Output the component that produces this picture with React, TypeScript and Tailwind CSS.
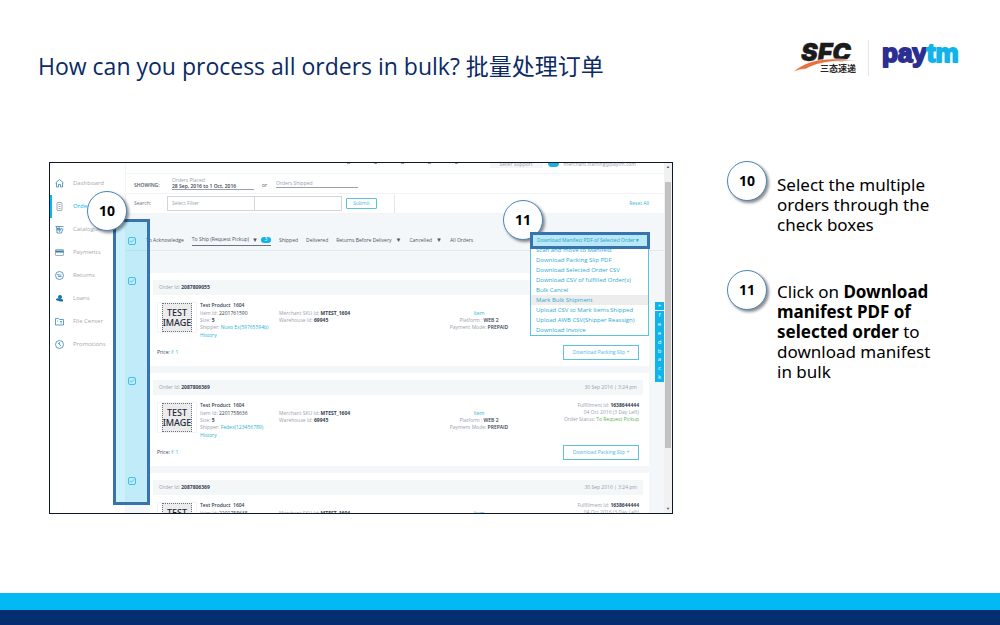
import { Check } from "lucide-react";
import type { ReactNode } from "react";

const NAV = [
  { label: "Dashboard", icon: <path d="M1 8 9 1l8 7M3 7v9h4v-5h4v5h4V7" /> },
  { label: "Orders", active: true, icon: <><rect x="4" y="1" width="10" height="16" rx="2" stroke="#8397a3" /><path d="M7 5h4M7 9h4M7 13h4" stroke="#8397a3" /></> },
  { label: "Catalogue", icon: <><path d="M1 3h16M3 3l1 13h9l3-9" /><path d="M5 6h5v4H5z" fill="#9aa7ae" /><path d="m8 14 6-8" /></> },
  { label: "Payments", icon: <><rect x="1" y="3" width="16" height="12" rx="1" stroke="#8ba0ad" /><path d="M1 7h16" strokeWidth="4" stroke="#2f7fac" /></> },
  { label: "Returns", icon: <><circle cx="9" cy="9" r="8" /><path d="M5 8h8M5 8l2-2M13 11H6" /></> },
  { label: "Loans", icon: <><circle cx="10" cy="6" r="4" fill="#1a72ad" stroke="none" /><path d="M2 10c4-3 8 0 14 1v4c-6 0-9-1-14-3Z" fill="#1a72ad" stroke="none" /></> },
  { label: "File Center", icon: <><path d="M1 3h6l2 2h8v11H1Z" /><path d="M12 13V8M10 10l2-2 2 2M4 8h2" stroke="#19a7db" /></> },
  { label: "Promotions", icon: <><circle cx="9" cy="9" r="8" /><path d="M9 4v5l3 3M6 6l3 3" stroke="#19a7db" /></> },
];

const MENU = [
  "Scan and move to Manifest",
  "Download Packing Slip PDF",
  "Download Selected Order CSV",
  "Download CSV of fulfilled Order(s)",
  "Bulk Cancel",
  "Mark Bulk Shipment",
  "Upload CSV to Mark Items Shipped",
  "Upload AWB CSV(Shipper Reassign)",
  "Download Invoice",
];

type Order = { id: string; item: string; shipper: string; date?: string; fulfillment?: string };

const ORDERS: Order[] = [
  { id: "2087809055", item: "2201761590", shipper: "Nuvo Ex(59765594b)" },
  { id: "2087806369", item: "2201758636", shipper: "Fedex(123456789)", date: "30 Sep 2016 | 3:24 pm", fulfillment: "1638644444" },
  { id: "2087806369", item: "2201758635", shipper: "Fedex(123456789)", date: "30 Sep 2016 | 3:24 pm", fulfillment: "1638644444" },
];

function SfcLogo() {
  return (
    <svg viewBox="0 0 76 44" className="w-[76px] h-[44px]" role="img" aria-label="SFC">
      <text x="9" y="25" fontFamily="Inter, Liberation Sans, sans-serif" fontSize="25" fontWeight="900" fontStyle="italic" fill="#1d1a1b" stroke="#1d1a1b" strokeWidth="0.5">SFC</text>
      <path d="M1 36C14 24 34 20 66 25C40 24 24 27 14 33C10 33 6 34 1 36Z" fill="#e8703a" stroke="#fff" strokeWidth="0.6" />
      <text x="28" y="36" fontFamily="Noto Sans CJK SC, sans-serif" fontSize="9" fontWeight="700" fill="#2a2526">三态速递</text>
    </svg>
  );
}

function PaytmLogo() {
  return (
    <svg viewBox="0 0 80 44" className="w-[80px] h-[44px]" role="img" aria-label="Paytm">
      <text x="1" y="26" fontFamily="Liberation Sans, sans-serif" fontSize="26" fontWeight="700" fill="#2b2f92" stroke="#2b2f92" strokeWidth="2" strokeLinejoin="round">
        pay<tspan fill="#10b4e8" stroke="#10b4e8">tm</tspan>
      </text>
    </svg>
  );
}

function Marker({ children, className = "" }: { children: ReactNode; className?: string }) {
  return (
    <span className={`flex size-10 shrink-0 items-center justify-center rounded-full border border-[#4a84bd] bg-white text-sm font-bold text-black shadow-[2px_2px_3px_rgba(0,0,0,0.45)] ${className}`}>
      {children}
    </span>
  );
}

function OrderCheck({ label, className = "" }: { label: string; className?: string }) {
  return (
    <span className={`relative block size-2 ${className}`}>
      <input type="checkbox" defaultChecked aria-label={label} className="block size-2 appearance-none rounded-xs border border-[#4cc4e6]" />
      <Check className="pointer-events-none absolute left-px top-px size-1.5 text-[#3fb9de]" strokeWidth={3} />
    </span>
  );
}

function Sidebar() {
  return (
    <nav className="w-[76px] shrink-0 border-r border-gray-100 bg-white pt-[9px] text-[6px]">
      {NAV.map(({ label, icon, active }) => (
        <a key={label} href="#/" className={`flex h-[23px] items-center gap-[9px] border-l-2 pl-[3px] ${active ? "border-[#00b9f5] text-[#00b9f5]" : "border-transparent text-[#a9a9a9]"}`}>
          <svg viewBox="0 0 18 18" className="size-[9px]" fill="none" stroke="#3d86b3" strokeWidth="1.6">{icon}</svg>
          {label}
        </a>
      ))}
    </nav>
  );
}

function TopBar() {
  return (
    <div className="flex h-[11px] shrink-0 justify-end gap-[5px] overflow-hidden border-b border-gray-100 bg-white pr-7 leading-[3px] text-gray-400">
      <div className="mr-[27px] flex gap-6">
        {[0, 1, 2, 3, 4].map((i) => (
          <span key={i} className="h-px w-[3px] bg-gray-400" />
        ))}
      </div>
      <span className="h-[5px] w-[53px] bg-[#f6f6f6] text-center leading-[2px]">Seller Support</span>
      <span className="h-1 w-[11px] rounded-b-full bg-[#12b1e7]" />
      <span>merchant.training@paytm.com</span>
    </div>
  );
}

function Filters() {
  return (
    <div className="shrink-0 bg-white">
      <div className="flex h-5 items-center border-b border-gray-100 pl-2">
        <span className="w-[38px] pt-1 font-semibold text-gray-600">SHOWING:</span>
        <label className="w-[82px] border-b border-gray-400 leading-[5px] text-gray-400">
          Orders Placed
          <input defaultValue="28 Sep, 2016 to 1 Oct, 2016" className="block h-[6px] w-full font-semibold text-gray-700" />
        </label>
        <span className="w-[22px] pl-2 pt-1 text-gray-600">or</span>
        <input aria-label="Orders Shipped" placeholder="Orders Shipped" className="h-[9px] w-[82px] border-b border-gray-400 placeholder:text-gray-400" />
      </div>
      <div className="flex h-5 items-center border-b border-gray-100 pl-2">
        <label htmlFor="filter" className="w-[33px] text-gray-500">Search:</label>
        <select id="filter" className="h-[15px] w-[88px] appearance-none border border-gray-300 pl-1 text-gray-400">
          <option>Select Filter</option>
        </select>
        <input aria-label="Search term" className="h-[15px] w-[87px] border border-l-0 border-gray-300" />
        <button className="ml-1 h-[11px] w-[31px] rounded-[1px] border border-[#5cc2de] text-[#4cb9d8]">Submit</button>
        <span className="ml-[17px] h-full border-l border-gray-200" />
        <button className="ml-auto mr-[15px] text-[#35b6d9]">Reset All</button>
      </div>
    </div>
  );
}

function Tabs() {
  return (
    <div className="flex h-[37px] shrink-0 items-end border-b border-[#e4eaed]">
      <OrderCheck label="Select all orders" className="mb-[5px] ml-[2px]" />
      <div className="ml-[10px] flex h-[19px] items-center gap-2 whitespace-nowrap text-gray-600">
        <a href="#/">To Acknowledge</a>
        <a href="#/" className="flex items-center gap-[3px] border-b border-gray-500 py-px">
          To Ship (Request Pickup)
          <span className="text-[6px] leading-[6px]">▼</span>
          <span className="flex h-[6px] w-[10px] items-center justify-center rounded-full bg-[#12b1e7] text-white">3</span>
        </a>
        <a href="#/">Shipped</a>
        <a href="#/">Delivered</a>
        <a href="#/" className="flex items-center gap-1">Returns Before Delivery <span className="text-[6px]">▼</span></a>
        <a href="#/" className="flex items-center gap-1">Cancelled <span className="text-[6px]">▼</span></a>
        <a href="#/">All Orders</a>
      </div>
    </div>
  );
}

function TestImage() {
  return (
    <div className="flex h-[31px] w-10 shrink-0 items-center justify-center border border-gray-100">
      <div className="flex h-[29px] w-[30px] flex-col items-center justify-center border border-dotted border-gray-500 bg-[#ececec] font-['Noto_Sans',sans-serif] text-[9px] font-medium leading-[10px] text-gray-800">
        <span>TEST</span>
        <span>IMAGE</span>
      </div>
    </div>
  );
}

function OrderCard({ order }: { order: Order }) {
  return (
    <article className="flex h-[93px] shrink-0">
      <OrderCheck label={`Select order ${order.id}`} className="ml-[2px] mt-1 shrink-0" />
      <div className="ml-[14px] mr-[15px] flex-1 bg-white px-[3px] pt-[7px] text-gray-400">
        <header className="mr-[3px] flex h-[15px] items-center justify-between bg-[#f3f7f8] px-[6px]">
          <span>Order Id: <b className="text-gray-700">{order.id}</b></span>
          <span>{order.date}</span>
        </header>
        <div className="flex pl-1 pt-[7px] leading-[7px]">
          <TestImage />
          <div className="ml-[3px] w-[79px] whitespace-nowrap">
            <p className="font-semibold text-gray-700">Test Product&nbsp; 1604</p>
            <p className="mt-px">Item Id: <span className="text-gray-700">{order.item}</span></p>
            <p>Size: <b className="text-gray-700">5</b></p>
            <p>Shipper: <a href="#/" className="text-[#25b3dc]">{order.shipper}</a></p>
            <a href="#/" className="mt-px block text-[#25b3dc]">History</a>
          </div>
          <div className="whitespace-nowrap pt-2">
            <p>Merchant SKU Id: <b className="text-gray-700">MTEST_1604</b></p>
            <p>Warehouse Id: <b className="text-gray-700">69945</b></p>
          </div>
          <div className="ml-auto w-[60px] whitespace-nowrap pt-2 text-center">
            <p className="text-[#25b3dc]">Item</p>
            <p>Platform : <span className="font-semibold text-gray-700">WEB 2</span></p>
            <p>Payment Mode: <span className="font-semibold text-gray-700">PREPAID</span></p>
          </div>
          <div className="ml-[48px] mr-[7px] w-[82px] whitespace-nowrap text-right">
            {order.fulfillment && (
              <>
                <p>Fulfillment Id: <b className="text-gray-700">{order.fulfillment}</b></p>
                <p>04 Oct 2016 (3 Day Left)</p>
                <p>Order Status: <span className="text-[#62b25a]">To Request Pickup</span></p>
              </>
            )}
          </div>
        </div>
        <div className="mr-[7px] flex items-center justify-between pl-1 pt-[6px]">
          <p className="text-gray-700">Price: <span className="text-[#25b3dc]">₹ 1</span></p>
          <button className="h-[15px] w-[76px] border border-[#5cc2de] text-[#4cb9d8]">Download Packing Slip +</button>
        </div>
      </div>
    </article>
  );
}

function BulkMenu() {
  return (
    <div className="absolute right-[22px] top-[69px] w-[120px]">
      <button className="relative z-10 flex h-[17px] w-full items-center justify-between whitespace-nowrap border-3 border-[#3873b0] bg-[#b9e8f9] px-[4px] text-[5px] text-[#259fc8]">
        Download Manifest PDF of Selected Order
        <span className="mr-1">▼</span>
      </button>
      <ul className="-mt-1 mr-px border border-t-0 border-[#5cc2de] bg-white text-[6px] leading-[10px] text-[#2babd1]">
        {MENU.map((item) => (
          <li key={item} className={item === "Mark Bulk Shipment" ? "bg-[#ededed]" : ""}>
            <a href="#/" className="block whitespace-nowrap pl-[5px]">{item}</a>
          </li>
        ))}
      </ul>
    </div>
  );
}

function SellerPanel() {
  return (
    <section className="relative mt-px h-[352px] min-w-0 flex-1">
      <div className="relative flex h-full overflow-hidden border border-gray-900 bg-white font-['Open_Sans',sans-serif]">
        <Sidebar />
        <div className="flex min-w-0 flex-1 flex-col bg-[#f3f7fa] text-[5px]">
          <TopBar />
          <Filters />
          <Tabs />
          <div className="mt-[22px] flex shrink-0 flex-col gap-[7px]">
            {ORDERS.map((order, i) => (
              <OrderCard key={i} order={order} />
            ))}
          </div>
        </div>
        <div className="flex w-2 shrink-0 flex-col items-center justify-between bg-[#f1f1f1] text-[4px] leading-[8px] text-gray-600">
          <span>▲</span>
          <span className="mb-auto mt-[11px] h-[266px] w-[6px] bg-[#c1c1c1]" />
          <span>▼</span>
        </div>
        <BulkMenu />
        <button className="absolute right-2 top-[139px] flex h-20 w-[9px] flex-col items-center bg-[#10b3ea] text-[6px] leading-[8px] text-white">
          <span className="w-full border-b border-white">+</span>
          {"feedback".split("").map((letter, i) => (
            <span key={i} className="flex-1">{letter}</span>
          ))}
        </button>
      </div>
      <div className="pointer-events-none absolute left-16 top-[57px] h-[286px] w-[37px] border-3 border-[#3873b0] bg-[#00b9f5]/20" />
      <Marker className="absolute left-[38px] top-[29px]">10</Marker>
      <Marker className="absolute right-[130px] top-[38px]">11</Marker>
    </section>
  );
}

export default function App() {
  return (
    <div className="flex min-h-screen flex-col bg-white font-['Noto_Sans','Noto_Sans_CJK_SC',sans-serif] text-black">
      <header className="flex items-start justify-between pl-[38px] pr-[39px] pt-9">
        <h1 className="mt-3 font-['Open_Sans','Noto_Sans_CJK_SC',sans-serif] text-[23px] leading-9 text-[#0b2a66]">How can you process all orders in bulk? 批量处理订单</h1>
        <div className="flex items-center">
          <SfcLogo />
          <span className="mr-3 h-9 border-l border-gray-200" />
          <PaytmLogo />
        </div>
      </header>

      <main className="mb-12 mt-[77px] flex gap-[54px] pl-[49px] pr-[50px]">
        <SellerPanel />
        <ol className="flex w-[223px] shrink-0 flex-col gap-[35px] text-[17px] leading-5">
          <li className="flex gap-[10px]">
            <Marker>10</Marker>
            <p className="mt-[14px] max-w-40">Select the multiple orders through the check boxes</p>
          </li>
          <li className="flex gap-[10px]">
            <Marker>11</Marker>
            <p className="mt-3 max-w-40">
              Click on <b>Download manifest PDF of selected order</b> to download manifest in bulk
            </p>
          </li>
        </ol>
      </main>

      <footer className="mt-auto">
        <div className="h-[17px] bg-[#00b9f5]" />
        <div className="h-[15px] bg-[#042e6f]" />
      </footer>
    </div>
  );
}
